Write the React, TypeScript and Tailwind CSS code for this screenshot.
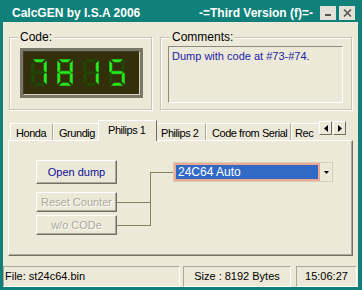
import React from "react";

const SEGMENTS: Record<string, string> = {
  a: "1.5,0 14.5,0 11,3.5 5,3.5",
  b: "16,1 16,13 14.5,13.5 12.5,12 12.5,4.5",
  c: "16,14 16,26 12.5,22.5 12.5,15 14.5,13.5",
  d: "1.5,27 14.5,27 11,23.5 5,23.5",
  e: "0,14 0,26 3.5,22.5 3.5,15 1.5,13.5",
  f: "0,1 0,13 1.5,13.5 3.5,12 3.5,4.5",
  g: "1.5,13.5 3.5,11.8 12.5,11.8 14.5,13.5 12.5,15.2 3.5,15.2",
};

function Digit({ lit }: { lit: string }) {
  return (
    <svg width="16" height="27" viewBox="0 0 16 27">
      {Object.keys(SEGMENTS).map((k) => (
        <polygon
          key={k}
          points={SEGMENTS[k]}
          fill={lit.includes(k) ? "#22e81c" : "#1f4a06"}
          stroke="#332f0a"
          strokeWidth="0.5"
        />
      ))}
    </svg>
  );
}

function Button({ label, disabled }: { label: string; disabled?: boolean }) {
  return (
    <div
      className={
        "flex w-[81px] items-center justify-center border border-t-white border-l-white border-r-[#716f64] border-b-[#716f64] bg-[#ece9d8] shadow-[inset_-1px_-1px_0_#aca899] text-[11px] " +
        (disabled ? "h-[20px] text-[#aca899] [text-shadow:1px_1px_0_#fff]" : "h-[24px] text-[#0c0c96]")
      }
    >
      {label}
    </div>
  );
}

function Tab({ label, w }: { label: string; w: string }) {
  return (
    <div
      className={
        "flex h-[17px] shrink-0 items-start overflow-hidden whitespace-nowrap border-t border-l border-t-white border-l-white border-r border-r-[#aca899] pl-[5px] pt-[1px] text-[11px] tracking-[-0.45px] text-black " +
        w
      }
    >
      {label}
    </div>
  );
}

export default function App() {
  return (
    <div className="flex h-[290px] w-[362px] flex-col bg-[#0f817a] font-['Liberation_Sans',Arial,sans-serif] text-black">
      {/* title bar */}
      <div className="flex h-[22px] items-center justify-between pl-[12px] pr-[7px] pt-[3px] text-[12px] font-bold text-white">
        <span>CalcGEN by I.S.A 2006</span>
        <div className="flex items-center">
          <span className="mr-[7px]">-=Third Version (f)=-</span>
          <div className="mr-[3px] flex h-[14px] w-[16px] items-end justify-center bg-[#e4e2d6] pb-[4px]">
            <div className="h-[2px] w-[6px] bg-[#555]" />
          </div>
          <div className="flex h-[14px] w-[16px] items-center justify-center bg-[#e4e2d6]">
            <svg width="9" height="8" viewBox="0 0 9 8">
              <path d="M1 0.5 L8 7.5 M8 0.5 L1 7.5" stroke="#555" strokeWidth="1.6" />
            </svg>
          </div>
        </div>
      </div>

      {/* client area */}
      <div className="ml-[3px] flex h-[265px] w-[355px] flex-col bg-[#ece9d8]">
        {/* group boxes */}
        <div className="ml-[6px] mt-[15px] flex gap-[8px]">
          <div className="relative h-[73px] w-[143px] border border-[#c8c5b3] shadow-[inset_1px_1px_0_#fff,1px_1px_0_#fff]">
            <span className="absolute left-[8px] top-[-8px] bg-[#ece9d8] px-[2px] text-[12px] leading-[14px]">Code:</span>
            <div className="ml-[10px] mt-[10px] w-[123px] bg-[#7a7766] p-[3px]">
              <div className="flex h-[44px] gap-[10px] border border-t-[#3c3a2c] border-l-[#3c3a2c] border-r-[#d8d4c4] border-b-[#d8d4c4] bg-[#332f0a] pl-[7px] pt-[7px]">
                <Digit lit="abc" />
                <Digit lit="abcdefg" />
                <Digit lit="bc" />
                <Digit lit="afgcd" />
              </div>
            </div>
          </div>
          <div className="relative h-[73px] w-[192px] border border-[#c8c5b3] shadow-[inset_1px_1px_0_#fff,1px_1px_0_#fff]">
            <span className="absolute left-[9px] top-[-8px] bg-[#ece9d8] px-[2px] text-[12px] leading-[14px]">Comments:</span>
            <div className="ml-[7px] mt-[8px] h-[57px] w-[175px] border border-t-[#8c8a7c] border-l-[#8c8a7c] border-r-white border-b-white pl-[3px] pt-[1px] text-[11px] text-[#1c1ca8]">
              Dump with code at #73-#74.
            </div>
          </div>
        </div>

        {/* tabs */}
        <div className="ml-[5px] mt-[10px] w-[345px]">
          <div className="flex h-[20px] items-end pl-[2px]">
            <Tab label="Honda" w="w-[43px]" />
            <Tab label="Grundig" w="w-[47px]" />
            <div className="relative z-10 -mx-[2px] mb-[-1px] flex h-[21px] w-[59px] shrink-0 items-start border-t border-l border-t-white border-l-white border-r border-r-[#716f64] bg-[#ece9d8] pl-[9px] pt-[1px] text-[11px] tracking-[-0.45px]">
              Philips 1
            </div>
            <Tab label="Philips 2" w="w-[51px]" />
            <Tab label="Code from Serial" w="w-[85px]" />
            <div className="flex h-[17px] w-[28px] shrink-0 items-start overflow-hidden whitespace-nowrap border-t border-l border-t-white border-l-white pl-[3px] pt-[1px] text-[11px] tracking-[-0.45px]">
              Rec
            </div>
            <div className="mb-[5px] flex">
              <div className="flex h-[14px] w-[13px] items-center justify-center border border-t-white border-l-white border-r-[#716f64] border-b-[#716f64] bg-[#ece9d8]">
                <svg width="4" height="7" viewBox="0 0 4 7"><path d="M4 0 L0 3.5 L4 7 Z" fill="#000" /></svg>
              </div>
              <div className="ml-[1px] flex h-[14px] w-[13px] items-center justify-center border border-t-white border-l-white border-r-[#716f64] border-b-[#716f64] bg-[#ece9d8]">
                <svg width="4" height="7" viewBox="0 0 4 7"><path d="M0 0 L4 3.5 L0 7 Z" fill="#000" /></svg>
              </div>
            </div>
          </div>
          <div className="flex h-[116px] border border-t-white border-l-white border-r-[#716f64] border-b-[#716f64] pl-[27px] pt-[19px] shadow-[inset_-1px_-1px_0_#aca899]">
            <div className="flex flex-col">
              <Button label="Open dump" />
              <div className="mt-[8px]">
                <Button label="Reset Counter" disabled />
              </div>
              <div className="mt-[3px]">
                <Button label="w/o CODe" disabled />
              </div>
            </div>
            <svg width="56" height="76" viewBox="0 0 56 76" className="shrink-0">
              <path d="M33 12.5 H56 M33.5 12 V66 M0 42.5 H33 M0 65.5 H33" stroke="#86815f" strokeWidth="1" fill="none" />
            </svg>
            <div className="mt-[2px] flex h-[20px] w-[160px] border border-[#d6cfb8] bg-[#ece9d8]">
              <div className="flex h-[18px] w-[146px] items-center border-2 border-[#f0a896] bg-[#316ac5] pl-[2px] text-[12px] text-white">
                24C64 Auto
              </div>
              <div className="flex flex-1 items-center justify-center">
                <svg width="5" height="3" viewBox="0 0 5 3"><path d="M0 0 H5 L2.5 3 Z" fill="#000" /></svg>
              </div>
            </div>
          </div>
        </div>

        {/* status bar */}
        <div className="mt-[10px] flex h-[21px] text-[11px]">
          <div className="flex w-[177px] items-center border border-t-[#aca899] border-l-[#aca899] border-r-white border-b-white pl-[1px]">
            File: st24c64.bin
          </div>
          <div className="ml-[3px] flex w-[108px] items-center justify-center border border-t-[#aca899] border-l-[#aca899] border-r-white border-b-white">
            Size : 8192 Bytes
          </div>
          <div className="ml-[5px] flex w-[61px] items-center justify-center border border-t-[#aca899] border-l-[#aca899] border-r-white border-b-white">
            15:06:27
          </div>
        </div>
      </div>
    </div>
  );
}
